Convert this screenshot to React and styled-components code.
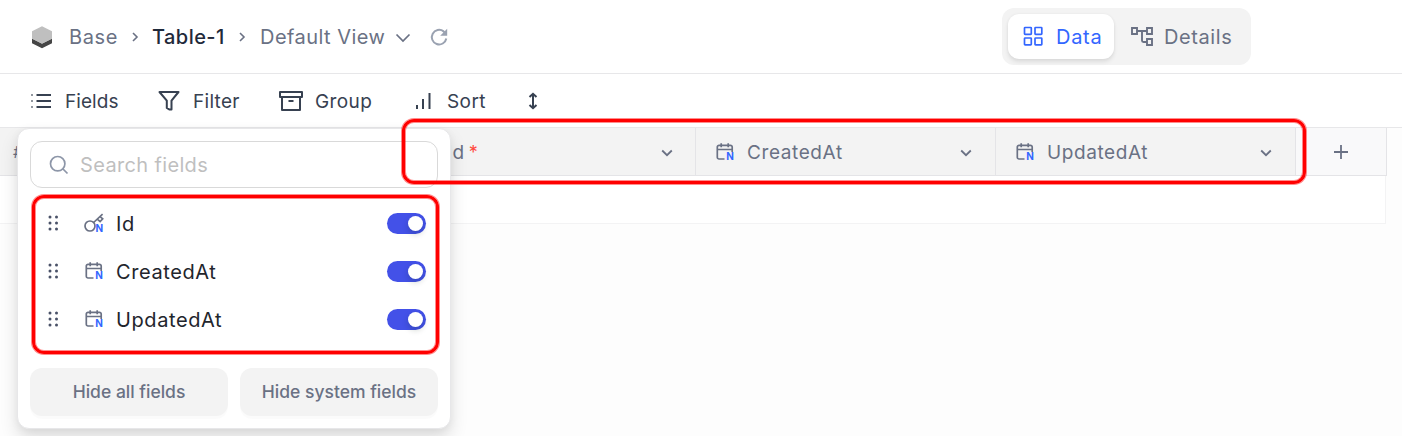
import React from "react";
import styled, { createGlobalStyle } from "styled-components";

const Global = createGlobalStyle`
  * { box-sizing: border-box; }
  html, body, #root { height: 100%; }
  body {
    margin: 0;
    overflow: hidden;
    background: #fdfdfd;
    font-family: Inter, "Liberation Sans", sans-serif;
    font-size: 20px;
    color: #374151;
  }
  button { font: inherit; color: inherit; border: 0; background: none; padding: 0; }
`;

const Page = styled.div`
  position: relative;
  display: flex;
  flex-direction: column;
  height: 436px;
  overflow: hidden;
`;
const TopBar = styled.header`
  display: flex;
  align-items: center;
  justify-content: space-between;
  height: 74px;
  padding: 0 151px 0 31px;
  background: #fff;
  border-bottom: 1px solid #e7e7e9;
`;
const Breadcrumb = styled.nav`
  display: flex;
  align-items: center;
  color: #6a7184;
`;
const Text = styled.span`
  display: block;
  flex: none;
  width: ${(p) => p.$w}px;
  padding-top: ${(p) => p.$drop || 0}px;
  font-size: ${(p) => p.$size || 20}px;
  font-weight: ${(p) => p.$weight || 400};
  letter-spacing: ${(p) => p.$track || 0}px;
  line-height: 28px;
  white-space: nowrap;
  color: ${(p) => p.$color || "inherit"};
`;
const Icon = styled.svg`
  display: block;
  flex: none;
  width: ${(p) => p.$w}px;
  height: ${(p) => p.$h || p.$w}px;
  margin: ${(p) => p.$m || 0};
  fill: none;
  stroke: currentColor;
  stroke-width: ${(p) => p.$stroke || 1.7};
  color: ${(p) => p.$color || "inherit"};
`;
const Tabs = styled.div`
  display: flex;
  width: 249px;
  height: 57px;
  margin-top: -1px;
  padding: 6px;
  border-radius: 12px;
  background: #f3f3f3;
`;
const Tab = styled.button`
  display: flex;
  align-items: center;
  width: ${(p) => (p.$active ? 106 : 131)}px;
  height: 45px;
  padding-left: 15px;
  border-radius: 11px;
  text-align: left;
  color: ${(p) => (p.$active ? "#3366ff" : "#6a7184")};
  background: ${(p) => (p.$active ? "#fff" : "transparent")};
  box-shadow: ${(p) => (p.$active ? "0 3px 4px rgba(0,0,0,.09), 0 0 3px rgba(0,0,0,.05)" : "none")};
`;
const Toolbar = styled.div`
  display: flex;
  align-items: center;
  height: 54px;
  padding-left: 31px;
  background: #fff;
  border-bottom: 1px solid #e7e7e9;
`;
const Tool = styled.button`
  display: flex;
  align-items: center;
  width: ${(p) => p.$w}px;
  text-align: left;
`;
const HeaderRow = styled.div`
  display: flex;
  width: 1387px;
  height: 48px;
  background: #f3f3f3;
  border-bottom: 1px solid #e4e4e7;
`;
const HeaderCell = styled.div`
  display: flex;
  align-items: center;
  width: ${(p) => p.$w}px;
  padding: 0 ${(p) => p.$right || 23}px 0 20px;
  border-right: 1px solid #e4e4e7;
  color: #6a7184;
`;
const IndexCell = styled(HeaderCell)`
  padding-left: 13px;
`;
const AddCell = styled(HeaderCell)`
  padding: 0;
  justify-content: center;
  background: #f9f9fa;
`;
const Grow = styled.span`
  flex: 1;
`;
const Required = styled.span`
  margin: 2px 0 0 4px;
  color: #ff4a3f;
  font-size: 18px;
`;
const EmptyRow = styled.div`
  width: 1386px;
  height: 48px;
  background: #fff;
  border: solid #f3f3f4;
  border-width: 0 1px 1px 0;
`;
const Menu = styled.section`
  position: absolute;
  left: 17px;
  top: 128px;
  width: 434px;
  height: 301px;
  padding: 12px;
  border: 1px solid #e7e7e9;
  border-radius: 12px;
  background: #fff;
  box-shadow: 0 10px 18px rgba(0,0,0,.12), 0 2px 8px rgba(0,0,0,.05);
`;
const Search = styled.div`
  display: flex;
  align-items: center;
  height: 47px;
  padding-left: 18px;
  border: 1px solid #d9d9d9;
  border-radius: 12px;
  color: #bfbfbf;
`;
const FieldList = styled.div`
  margin-top: 11px;
`;
const Field = styled.div`
  display: flex;
  align-items: center;
  height: 48px;
  padding: 0 12px 0 18px;
  color: #22252c;
`;
const Switch = styled.span`
  display: flex;
  justify-content: flex-end;
  width: 39px;
  height: 21px;
  padding: 3px;
  border-radius: 11px;
  background: #4351e8;
`;
const Knob = styled.i`
  width: 15px;
  height: 15px;
  border-radius: 50%;
  background: #fff;
  box-shadow: 0 3px 6px rgba(0,35,11,.2);
`;
const Actions = styled.div`
  display: flex;
  gap: 12px;
  margin-top: 25px;
`;
const Action = styled.button`
  display: flex;
  justify-content: center;
  align-items: center;
  width: 198px;
  height: 48px;
  border-radius: 12px;
  color: #6a7184;
  background: #f3f3f3;
  box-shadow: 0 3px 0 rgba(0,0,0,.015);
`;
const Highlight = styled.div`
  position: absolute;
  left: ${(p) => p.$x}px;
  top: ${(p) => p.$y}px;
  width: ${(p) => p.$w}px;
  height: ${(p) => p.$h}px;
  border: 3px solid #ff0000;
  border-radius: 12px;
  box-shadow: 0 0 0 1px rgba(255,0,0,.45), inset 0 0 0 1px rgba(255,0,0,.45);
  pointer-events: none;
`;
const BadgeLetter = styled.text`
  font: 700 10px Inter, sans-serif;
  fill: #3366ff;
  stroke: none;
`;

const ChevronRight = ({ m }) => (
  <Icon $w={8} $h={12} $m={m} viewBox="0 0 8 12" $stroke={1.6}><path d="M2 2l4 4-4 4" /></Icon>
);
const ChevronDown = () => (
  <Icon $w={12} $h={8} $m="2px 0 0" viewBox="0 0 12 8" $stroke={1.8}><path d="M1.2 1.5L6 6.2l4.8-4.7" /></Icon>
);
const CalendarIcon = ({ m }) => (
  <Icon $w={20} $m={m} viewBox="0 0 20 20" $color="#6a7184" $stroke={1.7}>
    <path d="M9.5 17H4a1.7 1.7 0 0 1-1.7-1.7V5.1A1.7 1.7 0 0 1 4 3.4h11.5a1.7 1.7 0 0 1 1.7 1.7V10M2.3 7.5h14.9M6.2 1.3v4M13.2 1.3v4" />
    <BadgeLetter x="11.2" y="17.8">N</BadgeLetter>
  </Icon>
);
const KeyIcon = ({ m }) => (
  <Icon $w={20} $m={m} viewBox="0 0 20 20" $color="#6a7184" $stroke={1.7}>
    <circle cx="6" cy="13" r="5" />
    <path d="M9.6 9.5L18.6 1.2M13.2 6.2l2.9 2.3 2.6-2.7-2.6-2.2" />
    <BadgeLetter x="11.5" y="18.6">N</BadgeLetter>
  </Icon>
);
const DragHandle = () => (
  <Icon $w={11} $h={16} viewBox="0 0 11 16" $m="0 25px 0 0">
    <g fill="#4a5268" stroke="none">
      {[2, 8, 14].map((y) => [2, 8.5].map((x) => <circle key={x + "-" + y} cx={x} cy={y} r="1.5" />))}
    </g>
  </Icon>
);

const columns = ["CreatedAt", "UpdatedAt"];
const fields = ["Id", ...columns];

export default function App() {
  return (
    <Page>
      <Global />
      <TopBar>
        <Breadcrumb>
          <Icon $w={22} $h={24} $m="0 16px 0 0" viewBox="0 0 22 24">
            <g stroke="none">
              <path d="M1 13.5l10 5 10-5v4.7L11 23.3 1 18.2z" fill="#454545" />
              <path d="M11 1.3l10 5v7.5l-10 5-10-5V6.3z" fill="#bfbfbf" />
            </g>
          </Icon>
          <Text $w={49} $track={0.6}>Base</Text>
          <ChevronRight m="1px 13px 0" />
          <Text $w={74} $weight={500} $track={0.45} $color="#1f293a">Table-1</Text>
          <ChevronRight m="1px 14px 0 12px" />
          <Text $w={126} $track={0.45}>Default View</Text>
          <Icon $w={16} $h={10} $m="2px 0 0 9px" viewBox="0 0 16 10"><path d="M1.5 1.5L8 8l6.5-6.5" /></Icon>
          <Icon $w={20} $m="0 0 0 18px" viewBox="0 0 20 20" $color="#9aa2b1" $stroke={2}>
            <path d="M17.3 11.5A7.3 7.3 0 1 1 14.6 4.4l2 1.8" />
            <path d="M18.2 1.8v7h-7z" fill="currentColor" stroke="none" />
          </Icon>
        </Breadcrumb>
        <Tabs>
          <Tab $active>
            <Icon $w={20} $m="0 13px 0 0" viewBox="0 0 20 20">
              {[1.5, 12].map((y) => [1.5, 12].map((x) => <rect key={x + "-" + y} x={x} y={y} width="6.8" height="6.8" rx=".6" />))}
            </Icon>
            <Text $w={48} $track={0.7} $drop={1}>Data</Text>
          </Tab>
          <Tab>
            <Icon $w={24} $h={22} $m="2px 10px 0 1px" viewBox="0 0 24 22" $stroke={1.9}>
              <path d="M2 2h5v6H2zM17 2h5v6h-5zM17 13h5v6h-5zM7 5h10M12 5v9.5a1.5 1.5 0 0 0 1.5 1.5H17" />
            </Icon>
            <Text $w={70} $track={0.6} $drop={1}>Details</Text>
          </Tab>
        </Tabs>
      </TopBar>

      <Toolbar>
        <Tool $w={127}>
          <Icon $w={20} $h={16} $m="0 14px 0 0" viewBox="0 0 20 16" $stroke={1.9}>
            <path d="M5.5 2H20M5.5 8H20M5.5 14H20" />
            <path d="M0 2h2M0 8h2M0 14h2" strokeOpacity=".55" />
          </Icon>
          <Text $w={54} $size={19} $track={0.05} $drop={2}>Fields</Text>
        </Tool>
        <Tool $w={120}>
          <Icon $w={22} $m="0 13px 0 0" viewBox="0 0 22 22" $stroke={2}>
            <path d="M1.5 2h19l-7 8.6v8.8h-2.3L8.8 18v-7.4z" strokeLinejoin="round" />
          </Icon>
          <Text $w={48} $size={19} $track={0.3} $drop={2}>Filter</Text>
        </Tool>
        <Tool $w={137}>
          <Icon $w={26} $h={22} $m="0 11px 0 0" viewBox="0 0 26 22" $stroke={2}>
            <path d="M2 2h22v5H2zM4 7v13h18V7M10.5 11h5" strokeLinejoin="round" />
          </Icon>
          <Text $w={57} $size={19} $track={0.4} $drop={2}>Group</Text>
        </Tool>
        <Tool $w={112}>
          <Icon $w={16} $h={18} $m="0 16px 0 0" viewBox="0 0 16 18" $stroke={2}>
            <path d="M2 13v4M8 7v10M14.5 1v16" />
          </Icon>
          <Text $w={41} $size={19} $track={0.4} $drop={2}>Sort</Text>
        </Tool>
        <Tool $w={12}>
          <Icon $w={12} $h={18} viewBox="0 0 12 18" $stroke={2}>
            <path d="M6 2v14M2.5 5L6 1.8 9.5 5M2.5 13L6 16.2 9.5 13" />
          </Icon>
        </Tool>
      </Toolbar>

      <HeaderRow>
        <IndexCell $w={396}><Text $w={12} $size={16} $drop={1}>#</Text></IndexCell>
        <HeaderCell $w={300} $right={22}>
          <KeyIcon m="0 11px 0 0" />
          <Text $size={19} $track={0.5} $drop={2}>Id</Text>
          <Required>*</Required>
          <Grow />
          <ChevronDown />
        </HeaderCell>
        {columns.map((name) => (
          <HeaderCell key={name} $w={300}>
            <CalendarIcon m="0 12px 0 -1px" />
            <Text $size={19} $track={0.6} $drop={2}>{name}</Text>
            <Grow />
            <ChevronDown />
          </HeaderCell>
        ))}
        <AddCell $w={91}>
          <Icon $w={16} viewBox="0 0 16 16" $stroke={1.8}><path d="M8 1v14M1 8h14" /></Icon>
        </AddCell>
      </HeaderRow>
      <EmptyRow />

      <Menu>
        <Search>
          <Icon $w={20} $m="0 11px 0 0" viewBox="0 0 20 20" $color="#8d96a8">
            <circle cx="8.7" cy="8.7" r="7.2" />
            <path d="M14 14l4.5 4.5" />
          </Icon>
          <Text $w={130} $track={0.35}>Search fields</Text>
        </Search>
        <FieldList>
          {fields.map((name) => (
            <Field key={name}>
              <DragHandle />
              {name === "Id" ? <KeyIcon m="0 12px 0 0" /> : <CalendarIcon m="0 12px 0 0" />}
              <Text $track={0.6} $drop={2}>{name}</Text>
              <Grow />
              <Switch><Knob /></Switch>
            </Field>
          ))}
        </FieldList>
        <Actions>
          <Action><Text $size={17.5} $weight={500}>Hide all fields</Text></Action>
          <Action><Text $size={17.5} $weight={500}>Hide system fields</Text></Action>
        </Actions>
      </Menu>

      <Highlight $x={402} $y={119} $w={904} $h={65} />
      <Highlight $x={32} $y={195} $w={407} $h={159} />
    </Page>
  );
}
